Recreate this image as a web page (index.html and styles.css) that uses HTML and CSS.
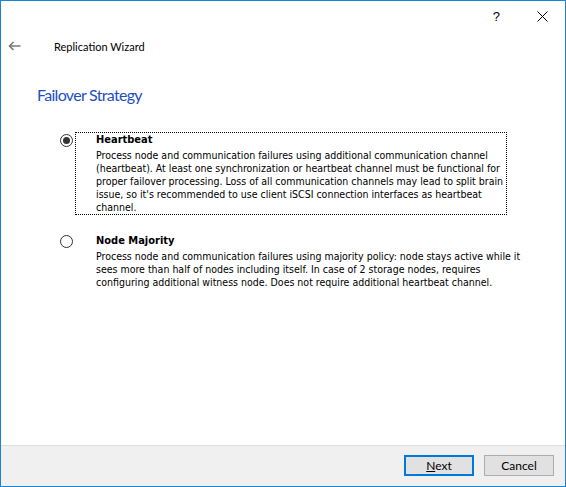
FILE: index.html
```html
<!DOCTYPE html>
<html lang="en">
<head>
    <meta charset="UTF-8">
    <meta name="viewport" content="width=device-width, initial-scale=1.0">
    <title>Replication Wizard</title>
    <link rel="stylesheet" href="styles.css">
</head>
<body>
    <div class="window">
        <div class="titlebar">
            <span class="help">?</span>
            <span class="close">
                <svg width="11" height="11" viewBox="0 0 11 11">
                    <path d="M0.5 0.5 L10.5 10.5 M10.5 0.5 L0.5 10.5" stroke="#000" stroke-width="1" fill="none"/>
                </svg>
            </span>
        </div>
        <div class="header">
            <span class="back">
                <svg width="13" height="10" viewBox="0 0 13 10">
                    <path d="M5.5 1 L1.5 5 L5.5 9 M1.5 5 L12.5 5" stroke="#7a7a7a" stroke-width="1.6" fill="none"/>
                </svg>
            </span>
            <span class="wizard-title">Replication Wizard</span>
        </div>
        <div class="content">
            <h1>Failover Strategy</h1>
            <div class="option focused">
                <span class="radio checked"></span>
                <div class="option-text">
                    <div class="option-name">Heartbeat</div>
                    <div class="option-desc">Process node and communication failures using additional communication channel (heartbeat). At least one synchronization or heartbeat channel must be functional for proper failover processing. Loss of all communication channels may lead to split brain issue, so it's recommended to use client iSCSI connection interfaces as heartbeat channel.</div>
                </div>
            </div>
            <div class="option">
                <span class="radio"></span>
                <div class="option-text">
                    <div class="option-name">Node Majority</div>
                    <div class="option-desc">Process node and communication failures using majority policy: node stays active while it sees more than half of nodes including itself. In case of 2 storage nodes, requires configuring additional witness node. Does not require additional heartbeat channel.</div>
                </div>
            </div>
        </div>
        <div class="footer">
            <button class="btn default"><u>N</u>ext</button>
            <button class="btn">Cancel</button>
        </div>
    </div>
</body>
</html>
```

FILE: styles.css
```css
* {
    padding: 0;
    margin: 0;
    box-sizing: border-box;
}

body {
    font-family: Lato, Arial, sans-serif;
    background-color: #ffffff;
}

.window {
    width: 566px;
    height: 487px;
    display: flex;
    flex-direction: column;
    border: 1px solid #1883d7;
    background-color: #ffffff;
}

.titlebar {
    height: 30px;
    display: flex;
    justify-content: flex-end;
    align-items: center;
    padding-right: 17px;
}

.help {
    font-family: "Liberation Sans", Arial, sans-serif;
    font-size: 13px;
    color: #000;
    margin-right: 37px;
    line-height: 13px;
    padding-top: 1px;
}

.close {
    display: flex;
}

.header {
    height: 30px;
    display: flex;
    align-items: center;
    padding-left: 7px;
}

.back {
    display: flex;
    width: 46px;
}

.wizard-title {
    font-size: 11px;
    color: #000;
    margin-top: 1px;
}

.content {
    padding: 24px 0 0 36px;
    flex: 1;
}

h1 {
    font-weight: normal;
    font-size: 16px;
    letter-spacing: -0.7px;
    line-height: 20px;
    color: #1f4fbf;
    margin-bottom: 27px;
}

.option {
    display: flex;
    align-items: flex-start;
    margin-left: 23px;
}

.radio {
    width: 13px;
    height: 13px;
    border: 1px solid #333;
    border-radius: 50%;
    background: #fff;
    margin-top: 2px;
    margin-right: 2px;
    display: flex;
    align-items: center;
    justify-content: center;
    flex-shrink: 0;
}

.radio.checked::after {
    content: "";
    width: 7px;
    height: 7px;
    border-radius: 50%;
    background: #333;
}

.option-text {
    width: 452px;
    padding: 0 2px 0 20px;
    border: 1px dotted transparent;
    font-family: "DejaVu Sans Condensed", "DejaVu Sans", sans-serif;
    font-size: 10.5px;
    line-height: 13px;
    color: #000;
}

.option.focused .option-text {
    width: 432px;
    padding-right: 0;
    border-color: #000;
}

.option + .option {
    margin-top: 18px;
}

.option-name {
    font-weight: bold;
    font-size: 11px;
    margin-bottom: 3px;
}

.footer {
    height: 41px;
    border-top: 1px solid #dfdfdf;
    background-color: #f0f0f0;
    display: flex;
    justify-content: flex-end;
    align-items: flex-start;
    padding: 9px 11px 0 0;
    gap: 10px;
}

.btn {
    width: 70px;
    height: 21px;
    font-family: Lato, Arial, sans-serif;
    font-size: 12px;
    color: #000;
    background-color: #e1e1e1;
    border: 1px solid #adadad;
}

.btn.default {
    border: 2px solid #0078d7;
}
```
